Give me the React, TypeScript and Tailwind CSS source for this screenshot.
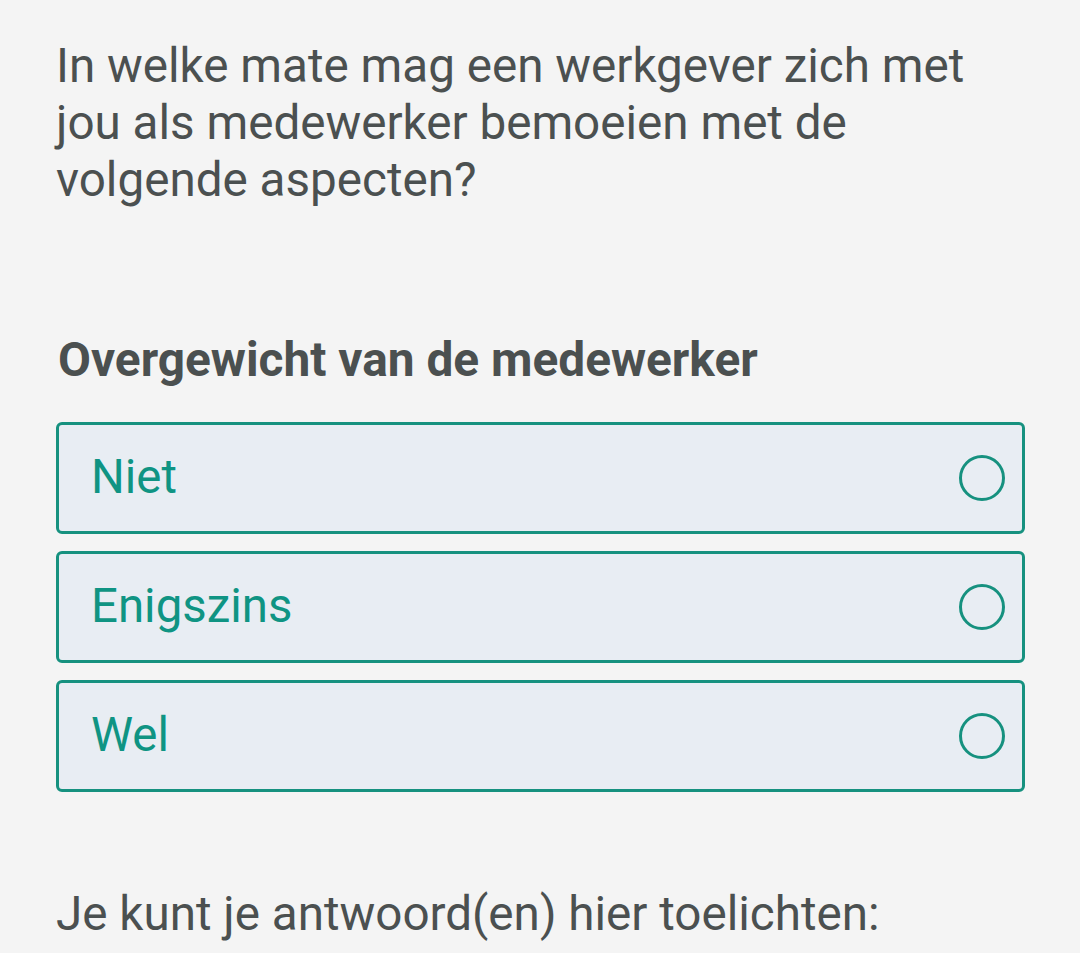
import { useState } from 'react';

const options = ['Niet', 'Enigszins', 'Wel'];

function RadioCircle({ checked }: { checked: boolean }) {
  return (
    <svg width="48" height="48" viewBox="0 0 48 48" className="shrink-0">
      <circle cx="24" cy="24" r="21.5" fill="none" stroke="#16917f" strokeWidth="3" />
      {checked && <circle cx="24" cy="24" r="12" fill="#16917f" />}
    </svg>
  );
}

export default function App() {
  const [selected, setSelected] = useState<string | null>(null);

  return (
    <div
      className="min-h-[953px] w-[1080px] bg-[#f4f4f4] pl-[56px] pr-[55px] pt-[38px] text-[#4b5050]"
      style={{ fontFamily: 'Roboto, "Noto Sans", sans-serif' }}
    >
      {/* Question */}
      <h1 className="text-[47.6px] leading-[57px] font-normal">
        In welke mate mag een werkgever zich met jou als medewerker bemoeien met de volgende aspecten?
      </h1>

      {/* Aspect */}
      <h2 className="mt-[126px] pl-[2px] text-[47.8px] leading-[50px] font-bold">Overgewicht van de medewerker</h2>

      <div className="mt-[37px] flex flex-col gap-[17px]">
        {options.map((opt) => (
          <button
            key={opt}
            onClick={() => setSelected(opt)}
            className="flex h-[112px] w-full items-center justify-between rounded-[6px] border-[3px] border-[#16917f] bg-[#e8edf3] pl-[32px] pr-[16px] text-left"
          >
            <span className="text-[47.4px] text-[#0f9483]">{opt}</span>
            <RadioCircle checked={selected === opt} />
          </button>
        ))}
      </div>

      <p className="mt-[94px] text-[47.6px] leading-[57px]">Je kunt je antwoord(en) hier toelichten:</p>
    </div>
  );
}
